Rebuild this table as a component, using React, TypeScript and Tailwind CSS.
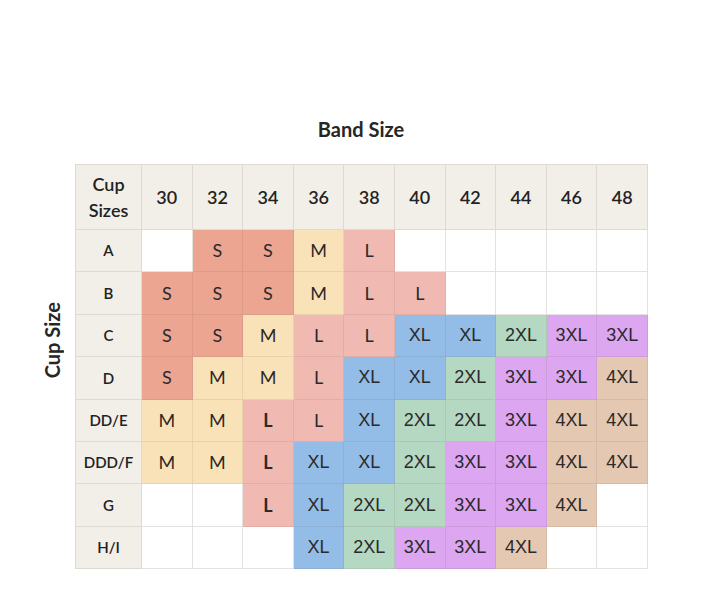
const bands = ["30", "32", "34", "36", "38", "40", "42", "44", "46", "48"];

const colors: Record<string, string> = {
  S: "bg-[#eca591]",
  M: "bg-[#fae2b8]",
  L: "bg-[#f0bab2]",
  XL: "bg-[#93bce6]",
  "2XL": "bg-[#b5d8c3]",
  "3XL": "bg-[#dca6f1]",
  "4XL": "bg-[#e4c8b1]",
};

const rows: { cup: string; sizes: string[] }[] = [
  { cup: "A", sizes: ["", "S", "S", "M", "L", "", "", "", "", ""] },
  { cup: "B", sizes: ["S", "S", "S", "M", "L", "L", "", "", "", ""] },
  { cup: "C", sizes: ["S", "S", "M", "L", "L", "XL", "XL", "2XL", "3XL", "3XL"] },
  { cup: "D", sizes: ["S", "M", "M", "L", "XL", "XL", "2XL", "3XL", "3XL", "4XL"] },
  { cup: "DD/E", sizes: ["M", "M", "L*", "L", "XL", "2XL", "2XL", "3XL", "4XL", "4XL"] },
  { cup: "DDD/F", sizes: ["M", "M", "L*", "XL", "XL", "2XL", "3XL", "3XL", "4XL", "4XL"] },
  { cup: "G", sizes: ["", "", "L*", "XL", "2XL", "2XL", "3XL", "3XL", "4XL", ""] },
  { cup: "H/I", sizes: ["", "", "", "XL", "2XL", "3XL", "3XL", "4XL", "", ""] },
];

export default function App() {
  return (
    <div className="w-[720px] h-[616px] bg-white text-[#222] font-['Lato',_'Liberation_Sans',_sans-serif]">
      <div className="pt-[117px] pl-[75px] w-[647px]">
        <div className="text-center text-[20px] font-bold leading-6 text-[#262626]">Band Size</div>
      </div>
      <div className="flex mt-[23px]">
        <div className="w-[75px] flex items-start justify-center pl-[28px]">
          <div className="mt-[138px] [writing-mode:vertical-rl] rotate-180 text-[20px] font-bold leading-6 text-[#262626]">
            Cup Size
          </div>
        </div>
        <div className="grid grid-cols-[66px_repeat(10,50.6px)] border-l border-t border-[#dedad3]">
          <div className="h-[65px] bg-[#f2efe8] border-r border-b border-[#dedad3] flex items-center justify-center text-center text-[18px] font-semibold leading-[26px]">
            Cup
            <br />
            Sizes
          </div>
          {bands.map((b) => (
            <div
              key={b}
              className="h-[65px] bg-[#f2efe8] border-r border-b border-[#dedad3] flex items-center justify-center text-[18px] font-semibold"
            >
              {b}
            </div>
          ))}
          {rows.map((r) => (
            <>
              <div
                key={r.cup}
                className="h-[42.4px] bg-[#f2efe8] border-r border-b border-[#dedad3] flex items-center justify-center text-[15px] font-semibold"
              >
                {r.cup}
              </div>
              {r.sizes.map((s, i) => {
                const bold = s.endsWith("*");
                const label = bold ? s.slice(0, -1) : s;
                const xl = label.includes("XL");
                return (
                  <div
                    key={r.cup + i}
                    className={
                      "h-[42.4px] border-r border-b flex items-center justify-center text-[18px] text-[#2a2a2a] " +
                      (label ? colors[label] + " border-[rgba(110,90,80,0.12)]" : "bg-white border-[#e4e2de]") +
                      (bold ? " font-bold" : "") +
                      (xl ? " font-['Liberation_Sans',_sans-serif]" : "")
                    }
                  >
                    {label}
                  </div>
                );
              })}
            </>
          ))}
        </div>
      </div>
    </div>
  );
}
